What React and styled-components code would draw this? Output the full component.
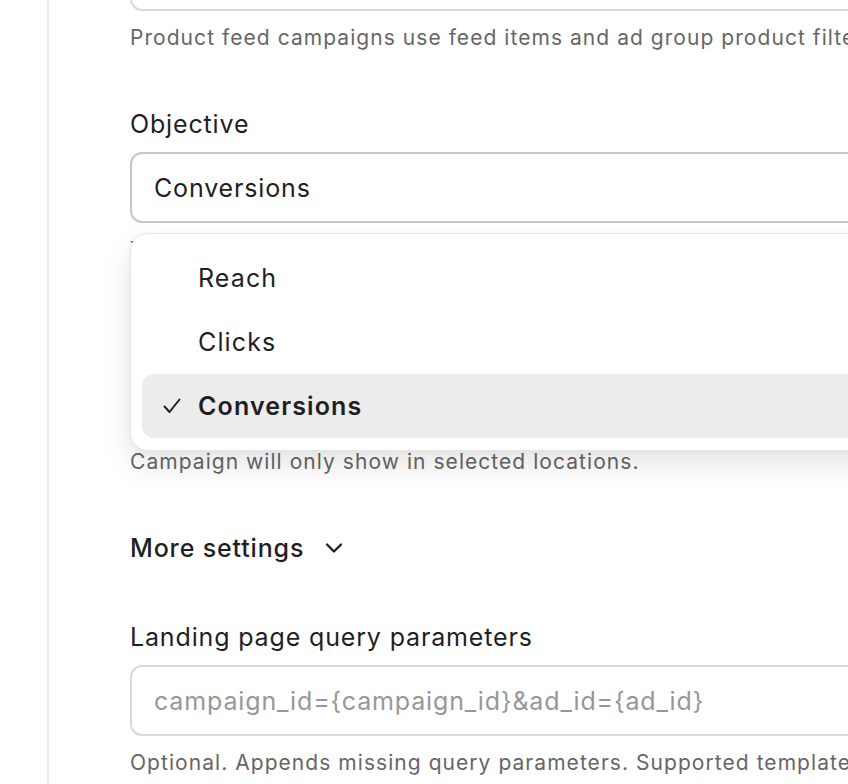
import styled, { createGlobalStyle } from "styled-components";
import { ChevronDown } from "lucide-react";

const GlobalStyle = createGlobalStyle`
  html, body {
    margin: 0;
    padding: 0;
    background: #ffffff;
    overflow: hidden;
  }
  body {
    font-family: Inter, "Noto Sans", "Liberation Sans", sans-serif;
    letter-spacing: 0.053em;
    color: #1f1f1f;
    -webkit-font-smoothing: antialiased;
  }
`;

const objectives = ["Reach", "Clicks", "Conversions"];

const Check = () => (
  <svg width="18" height="16" viewBox="0 0 18 16" fill="none">
    <path
      d="M1.5 8.5 L6.5 14 L16.5 1.5"
      stroke="#1f1f1f"
      strokeWidth="2"
      strokeLinecap="round"
      strokeLinejoin="round"
    />
  </svg>
);

const Field = ({ label, value, placeholder, help, active, children }) => (
  <FieldBlock>
    <Label>{label}</Label>
    <InputWrap>
      <InputBox $active={active} $placeholder={!value}>
        {value || placeholder}
      </InputBox>
      {children}
    </InputWrap>
    {help && <Help>{help}</Help>}
  </FieldBlock>
);

const App = () => {
  const selected = "Conversions";

  return (
    <>
      <GlobalStyle />
      <Shell>
        <Rail />
        <Main>
          <Column>
            <Field
              label="Campaign type"
              value="Product feed"
              help="Product feed campaigns use feed items and ad group product filters to choose which products to show."
            />
            <Field
              label="Objective"
              value="Conversions"
              active
              help="Your objective determines how bids are optimized for this campaign."
            >
              <Menu>
                {objectives.map((o) => (
                  <Option key={o} $selected={o === selected}>
                    <CheckSlot>{o === selected && <Check />}</CheckSlot>
                    <span>{o}</span>
                  </Option>
                ))}
              </Menu>
            </Field>
            <Field
              label="Locations"
              value="United States"
              help="Campaign will only show in selected locations."
            />
            <Toggle>
              More settings
              <ChevronDown size={28} strokeWidth={2} color="#1f1f1f" />
            </Toggle>
            <Field
              label="Landing page query parameters"
              placeholder="campaign_id={campaign_id}&ad_id={ad_id}"
              help="Optional. Appends missing query parameters. Supported template variables: {campaign_id}, {ad_group_id}, {ad_id}."
            />
          </Column>
        </Main>
      </Shell>
    </>
  );
};

export default App;

const Shell = styled.div`
  display: flex;
  min-height: 100vh;
`;

const Rail = styled.aside`
  width: 47px;
  flex-shrink: 0;
  border-right: 2px solid #ebebeb;
`;

const Main = styled.main`
  flex: 1;
  padding-left: 81px;
  overflow: hidden;
`;

const Column = styled.div`
  width: 1100px;
  margin-top: -106px;
  display: flex;
  flex-direction: column;
  gap: 53px;
`;

const FieldBlock = styled.div`
  display: flex;
  flex-direction: column;
`;

const Label = styled.div`
  font-size: 25px;
  line-height: 36px;
  color: #1f1f1f;
  margin-bottom: 10px;
`;

const InputWrap = styled.div`
  position: relative;
`;

const InputBox = styled.div`
  box-sizing: border-box;
  height: 71px;
  display: flex;
  align-items: center;
  padding: 0 22px;
  border: 2px solid ${({ $active }) => ($active ? "#c6c6c6" : "#d9d9d9")};
  border-radius: 12px;
  font-size: 25px;
  color: ${({ $placeholder }) => ($placeholder ? "#979797" : "#1f1f1f")};
  white-space: nowrap;
`;

const Help = styled.div`
  margin-top: 12px;
  font-size: 21px;
  line-height: 30px;
  letter-spacing: 0.05em;
  color: #666666;
  white-space: nowrap;
`;

const Menu = styled.div`
  position: absolute;
  top: calc(100% + 10px);
  left: 0;
  right: 0;
  z-index: 2;
  box-sizing: border-box;
  padding: 12px 11px;
  background: #ffffff;
  border: 1px solid #e6e6e6;
  border-radius: 18px;
  box-shadow: 0 14px 32px rgba(0, 0, 0, 0.1), 0 2px 6px rgba(0, 0, 0, 0.04);
  display: flex;
  flex-direction: column;
`;

const Option = styled.div`
  height: 64px;
  display: grid;
  grid-template-columns: 56px 1fr;
  align-items: center;
  border-radius: 12px;
  font-size: 25px;
  letter-spacing: 0.045em;
  color: #1f1f1f;
  font-weight: ${({ $selected }) => ($selected ? 600 : 400)};
  background: ${({ $selected }) => ($selected ? "#ececec" : "transparent")};
`;

const CheckSlot = styled.span`
  display: flex;
  align-items: center;
  padding-left: 21px;
`;

const Toggle = styled.button`
  align-self: flex-start;
  display: flex;
  align-items: center;
  gap: 16px;
  height: 36px;
  padding: 0;
  border: none;
  background: none;
  font-family: inherit;
  letter-spacing: inherit;
  font-size: 25px;
  font-weight: 500;
  color: #1f1f1f;
  cursor: pointer;
`;
